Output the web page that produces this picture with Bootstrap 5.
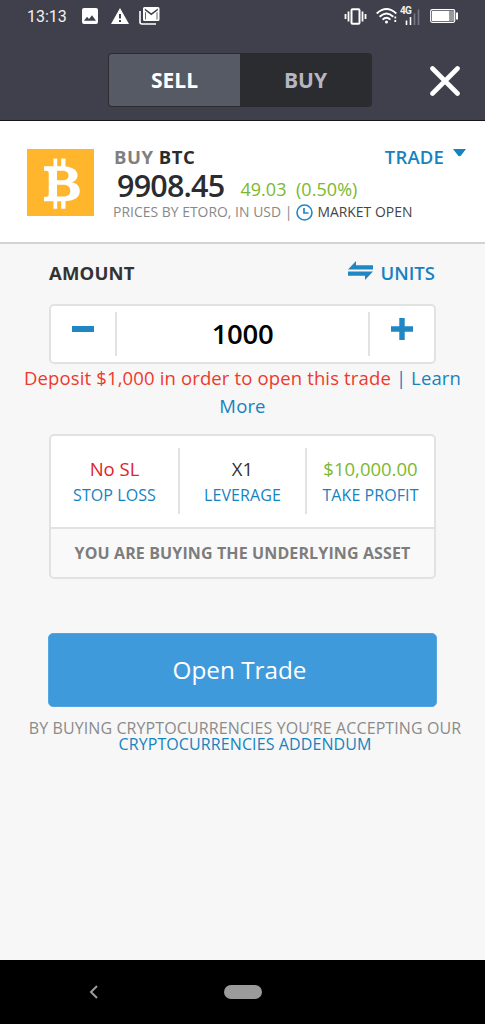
<!DOCTYPE html>
<html lang="en">
<head>
<meta charset="utf-8">
<meta name="viewport" content="width=device-width, initial-scale=1">
<title>Open Trade</title>
<link rel="stylesheet" href="https://cdn.jsdelivr.net/npm/bootstrap@5.3.0/dist/css/bootstrap.min.css">
<style>
  body { font-family: "Open Sans", "Noto Sans", sans-serif; background: #f7f7f7; color: #333; height: 1024px; overflow: hidden; }
  svg { display: block; flex: none; }
  a, .link-blue { color: #1583bf; text-decoration: none; }
  .topbar { height: 121px; background: #3f404b; border-bottom: 1px solid #15161b; }
  .status { height: 32px; padding: 0 27px; color: #f2f2f2; }
  .status-time { font: 16px/32px Roboto, sans-serif; width: 39px; white-space: nowrap; padding-top: 1px; }
  .signal { width: 19px; height: 18px; margin-left: 3px; }
  .g4 { font: 700 10px/9px "Roboto", sans-serif; left: -1px; top: -1px; letter-spacing: -.7px; }
  .switch { width: 264px; height: 54px; margin: 21px 0 0 108px; border-radius: 4px; background: #2b2c30; padding: 1px; }
  .switch .btn { border: 0; border-radius: 3px; font-size: 21px; font-weight: 700; line-height: 52px; padding: 0; }
  .switch .sell { background: #555a65; color: #fff; border-radius: 3px 0 0 3px; }
  .switch .buy { color: #b6b6c2; }
  .instrument { height: 123px; background: #fff; border-bottom: 2px solid #d3d3d3; padding: 28px 19px 0 27px; }
  .info { padding-left: 19px; }
  .top-line { margin-top: -1px; }
  .sym { font-size: 18.5px; font-weight: 700; line-height: 18px; color: #808080; letter-spacing: .5px; padding-left: 1px; }
  .sym b { font-weight: 700; color: #2b2b2b; }
  .price { font-size: 30.5px; font-weight: 600; line-height: 34px; color: #2b2c30; letter-spacing: -.8px; padding-left: 4px; margin-top: 2px; }
  .change { font-size: 18px; line-height: 34px; color: #7cb82f; padding-left: 16px; padding-top: 6px; white-space: pre; letter-spacing: .05px; }
  .src { font-size: 13.9px; line-height: 20px; color: #888; white-space: nowrap; margin-top: -4px; letter-spacing: .03px; }
  .trade { font-size: 18.5px; font-weight: 600; line-height: 18px; letter-spacing: .15px; }
  main { height: 716px; padding: 14px 48px 0; }
  .amt-label { font-size: 18.5px; font-weight: 700; line-height: 30px; padding-left: 1px; letter-spacing: .15px; }
  .units { font-size: 18.5px; font-weight: 600; line-height: 30px; gap: 8px; padding-right: 2px; }
  .stepper, .params { border: 2px solid #e2e2e2; border-radius: 5px; background: #fff; margin: 0 0 0 1px; width: 387px; }
  .stepper { height: 60px; margin-top: 16px; }
  .stepper .step { width: 66px; height: 44px; border: 0; border-radius: 0; padding: 0 0 10px; }
  .stepper .num { font-size: 27.5px; font-weight: 600; color: #000; line-height: 56px; letter-spacing: -.3px; }
  .sep-r { border-right: 2px solid #e2e2e2 !important; }
  .sep-l { border-left: 2px solid #e2e2e2 !important; }
  .notice { color: #ee3a2c; font-size: 18.5px; line-height: 28px; margin: 0 -28px; text-align: center; letter-spacing: .14px; }
  .params { height: 145px; margin-top: 14px; background: #f9f9f9; }
  .cells { height: 93px; background: #fff; border-bottom: 2px solid #e2e2e2; border-radius: 4px 4px 0 0; padding: 12px 0; }
  .cell { height: 66px; padding-top: 7px; text-align: center; white-space: nowrap; }
  .cell .v { font-size: 18.5px; line-height: 27px; }
  .cell .k { font-size: 16px; line-height: 27px; letter-spacing: .08px; }
  .c1 { width: 129px; } .c2 { width: 127px; }
  .asset { font-size: 16px; font-weight: 700; line-height: 49px; color: #7d7d7d; text-align: center; letter-spacing: .12px; }
  .open { height: 74px; width: 389px; margin-top: 54px; background: #3f9adc !important; color: #fff !important; border: 1px solid #55a6e0; border-radius: 5px; font-size: 24.3px; line-height: 72px; padding: 0 6px 0 0; }
  .terms { font-size: 16px; line-height: 16px; color: #8b8b8b; text-align: center; margin: 13px -30px 0; letter-spacing: .1px; padding-left: 5px; }
  .sysnav { height: 64px; background: #000; padding-left: 88px; }
  .home { width: 38px; height: 14px; border-radius: 7px; background: #9b9b9b; margin-left: 125px; }
</style>
</head>
<body>
<header class="topbar">
  <div class="status d-flex align-items-center">
    <span class="status-time">13:13</span>
    <svg class="ms-3" width="16" height="16" viewBox="0 0 16 16"><path fill="#fff" fill-rule="evenodd" d="M2 0h12a2 2 0 0 1 2 2v12a2 2 0 0 1-2 2H2a2 2 0 0 1-2-2V2a2 2 0 0 1 2-2zm0 12.800h12l-4-5.500-3 3.800-2-2.300z"/></svg>
    <svg width="18" height="16" viewBox="0 0 18 16" style="margin-left:13px"><path fill="#fff" fill-rule="evenodd" d="M9 0l9 16H0zM8 6v4.500h2V6zm0 6v2h2v-2z"/></svg>
    <svg width="21" height="18" viewBox="0 0 21 18" style="margin-left:10px"><path fill="none" stroke="#fff" stroke-width="1.600" d="M1 4v11a2 2 0 0 0 2 2h14"/><path fill="#fff" fill-rule="evenodd" d="M5.500 0h13.500a1.500 1.500 0 0 1 1.500 1.500v11a1.500 1.500 0 0 1-1.500 1.500H5.500a1.500 1.500 0 0 1-1.500-1.500v-11A1.500 1.500 0 0 1 5.500 0zM5.800 1.500v1.800l6.500 5 6.500-5V1.500l-6.500 4.800zM6.200 5v7.500h.8V5.600zM18.400 5v7.500h-.8V5.600z"/></svg>
    <svg class="ms-auto" width="23" height="17" viewBox="0 0 23 17"><rect x="7.500" y="1.200" width="8" height="14.600" rx="1" fill="none" stroke="#fff" stroke-width="2"/><path stroke="#fff" stroke-width="1.800" d="M4.500 3.500v10M1.500 6v5M18.500 3.500v10M21.500 6v5"/></svg>
    <svg width="22" height="16" viewBox="0 0 22 16" style="margin-left:9px"><g fill="none" stroke="#fff" stroke-width="1.900"><path d="M.7 5.500Q10.500-3.300 20.300 5.500M3.600 8.700Q10.500 2.300 17.300 8.700M6.500 11.600Q10.500 8 14.500 11.600"/></g><circle cx="10.500" cy="14" r="1.500" fill="#fff"/><path stroke="#fff" stroke-width="1.800" stroke-dasharray="2 1.500" d="M19.300 8.500v7"/></svg>
    <div class="signal position-relative"><span class="g4 position-absolute">4G</span>
      <svg width="19" height="18" viewBox="0 0 19 18"><path stroke="#fff" stroke-width="1.600" d="M5.500 13.500v4.500M9.500 10v8"/><path stroke="#777883" stroke-width="1.600" d="M13.500 6.500V18M17.500 2.500V18"/></svg></div>
    <svg width="28" height="14" viewBox="0 0 28 14" style="margin-left:10px"><rect x=".7" y=".7" width="24" height="12.600" rx="1.500" fill="none" stroke="#fff" stroke-width="1.200"/><path fill="#fff" d="M2 2h17.500v10H2zM26 3.500h2v7h-2z"/><path fill="#999aa0" d="M19.500 2H24v10h-4.500z"/></svg>
  </div>
  <div class="d-flex">
    <div class="switch d-flex">
      <button class="btn sell w-50">SELL</button><button class="btn buy w-50">BUY</button>
    </div>
    <svg width="30" height="30" viewBox="0 0 30 30" style="margin:34px 0 0 58px"><path stroke="#fff" stroke-width="4.600" stroke-linecap="round" d="M2.500 2.500l25 25M27.500 2.500l-25 25"/></svg>
  </div>
</header>

<section class="instrument d-flex">
  <svg width="67" height="67" viewBox="0 0 67 67"><rect width="67" height="67" fill="#ffb62c"/><path fill="#fff" fill-rule="evenodd" d="M17 17.300H26.500V9.500h3.700v7.800h4V9.500h4.300v8c7.500.7 12 3.800 12 8.800 0 3.700-2.300 5.800-5.700 7 5.100 1.200 8 4.200 8 8.700 0 6.100-5 9.600-14.300 10.100v7.600h-4.300v-7.500h-4v7.500h-3.700v-7.500H17v-4.400h2.200c1.700 0 2.500-.8 2.500-2.500V24.300c0-1.700-.8-2.500-2.500-2.500H17zM30 21.800v9.400h5c4.200 0 6.500-1.500 6.500-4.800 0-3.100-2.300-4.600-6.500-4.600zM30 35.800v11.800h5.500c5.100 0 7.800-1.800 7.800-5.900s-2.700-5.900-7.800-5.900z"/></svg>
  <div class="info flex-grow-1">
    <div class="top-line d-flex justify-content-between"><div class="sym">BUY <b>BTC</b></div>
      <a class="trade d-flex" href="#">TRADE<svg width="13" height="8" viewBox="0 0 13 8" style="margin:1px 0 0 9px"><path fill="#1583bf" d="M0 0h13L8 6.500q-1.500 1.500-3 0z"/></svg></a></div>
    <div class="d-flex"><span class="price">9908.45</span><span class="change">49.03  (0.50%)</span></div>
    <div class="src d-flex align-items-center">PRICES BY ETORO, IN USD |<svg class="mx-1" width="17" height="17" viewBox="0 0 17 17"><circle cx="8.500" cy="8.500" r="7.500" fill="none" stroke="#2187c4" stroke-width="1.600"/><path fill="none" stroke="#2187c4" stroke-width="1.700" d="M8 4v5h4.500"/></svg><span style="color:#444">MARKET OPEN</span></div>
  </div>
</section>

<main>
  <div class="d-flex justify-content-between">
    <span class="amt-label">AMOUNT</span>
    <a class="units d-flex" href="#"><svg width="25" height="20" viewBox="0 0 25 20" style="margin-top:3px"><path fill="#2187c4" d="M0 8.500L8 0v4.300H25v4.200zM25 10.500L17 19v-4.300H0v-4.200z"/></svg>UNITS</a>
  </div>
  <div class="stepper d-flex align-items-center">
    <button class="btn step sep-r d-flex align-items-center justify-content-center"><svg width="22" height="6"><path fill="#2187c4" d="M0 0h22v6H0z"/></svg></button>
    <div class="num flex-grow-1 text-center">1000</div>
    <button class="btn step sep-l d-flex align-items-center justify-content-center"><svg width="22" height="22" viewBox="0 0 22 22"><path fill="#2187c4" d="M8.300 0h5.400v8.300H22v5.400h-8.300V22H8.300v-8.300H0V8.300h8.300z"/></svg></button>
  </div>
  <div class="notice">Deposit $1,000 in order to open this trade <a href="#">| Learn<br>More</a></div>
  <div class="params">
    <div class="cells d-flex">
      <div class="cell sep-r c1"><div class="v" style="color:#e0222b">No SL</div><div class="k link-blue">STOP LOSS</div></div>
      <div class="cell sep-r c2"><div class="v">X1</div><div class="k link-blue">LEVERAGE</div></div>
      <div class="cell flex-grow-1"><div class="v" style="color:#7cb82f">$10,000.00</div><div class="k link-blue">TAKE PROFIT</div></div>
    </div>
    <div class="asset">YOU ARE BUYING THE UNDERLYING ASSET</div>
  </div>
  <button class="btn open d-block">Open Trade</button>
  <div class="terms">BY BUYING CRYPTOCURRENCIES YOU’RE ACCEPTING OUR<br><a href="#">CRYPTOCURRENCIES ADDENDUM</a></div>
</main>
<nav class="sysnav d-flex align-items-center">
  <svg width="11" height="14" viewBox="0 0 11 14"><path fill="none" stroke="#9b9b9b" stroke-width="2" d="M9 1L3 7l6 6"/></svg>
  <div class="home"></div>
</nav>
<script src="https://cdn.jsdelivr.net/npm/bootstrap@5.3.0/dist/js/bootstrap.bundle.min.js"></script>
</body>
</html>
